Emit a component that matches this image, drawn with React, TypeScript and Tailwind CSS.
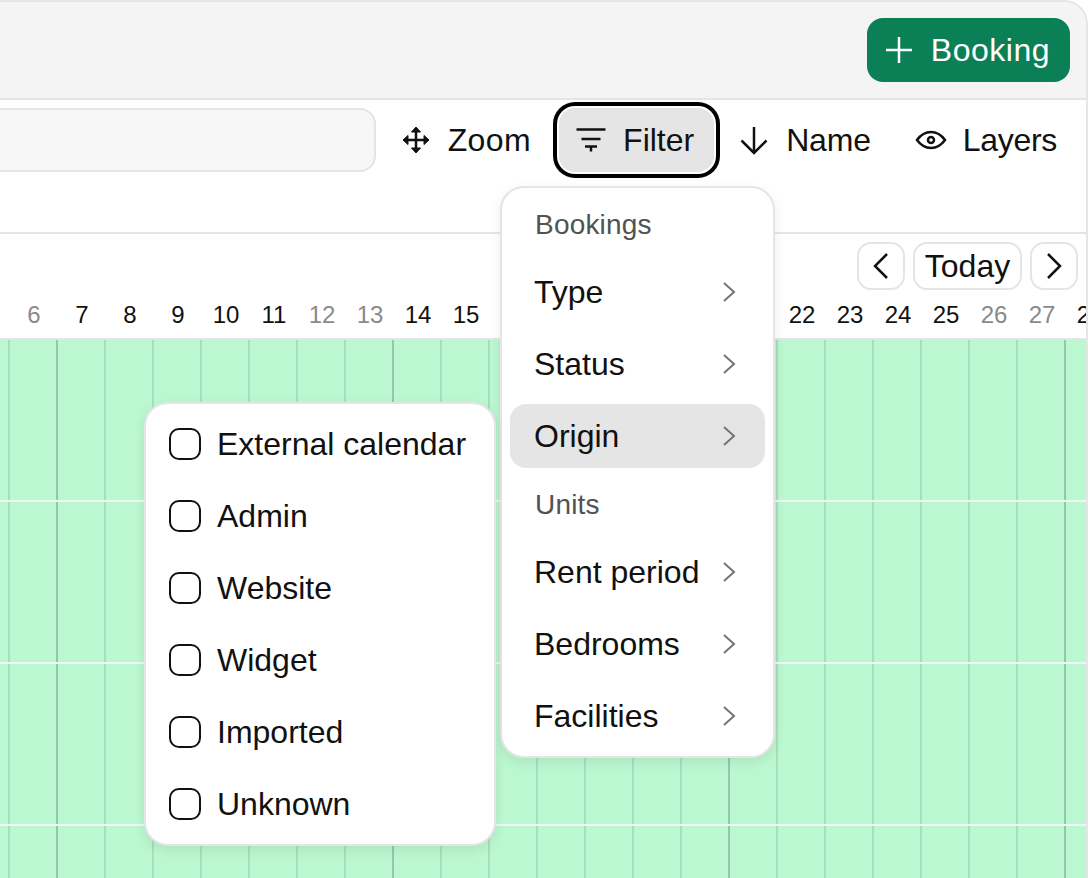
function PlusIcon() {
  return (
    <svg viewBox="0 0 32 32" className="w-8 h-8 shrink-0" fill="none" stroke="currentColor" strokeWidth="2.5">
      <path d="M16 3V29M3 16H29" />
    </svg>
  );
}

function MoveIcon() {
  return (
    <svg viewBox="0 0 32 32" className="w-8 h-8 shrink-0" fill="currentColor" stroke="currentColor" strokeWidth="1" strokeLinejoin="round">
      <path d="M16 5V27M5 16H27" fill="none" strokeWidth="2.5" />
      <path d="M16 3L20.5 8H11.5Z" />
      <path d="M16 29L20.5 24H11.5Z" />
      <path d="M3 16L8 11.5V20.5Z" />
      <path d="M29 16L24 11.5V20.5Z" />
    </svg>
  );
}

function FilterIcon() {
  return (
    <svg viewBox="0 0 32 32" className="w-8 h-8 shrink-0" fill="none" stroke="currentColor" strokeWidth="2.5">
      <path d="M1.5 5.5H30.5M6.5 15H25.5M10 22.5H22M16 22.5V27.5" />
    </svg>
  );
}

function ArrowDownIcon() {
  return (
    <svg viewBox="0 0 32 32" className="w-8 h-8 shrink-0" fill="none" stroke="currentColor" strokeWidth="2.5">
      <path d="M16 3V29M3.5 16.5L16 29L28.5 16.5" />
    </svg>
  );
}

function EyeIcon() {
  return (
    <svg viewBox="0 0 32 32" className="w-8 h-8 shrink-0" fill="none" stroke="currentColor" strokeWidth="2.5">
      <path d="M2 16C6 10.5 10.5 8 16 8S26 10.5 30 16C26 21.5 21.5 24 16 24S6 21.5 2 16Z" />
      <circle cx="16" cy="16" r="3" />
    </svg>
  );
}

function NavChevron({ dir }: { dir: "left" | "right" }) {
  return (
    <svg viewBox="0 0 32 32" className="w-8 h-8" fill="none" stroke="currentColor" strokeWidth="2.5">
      <path d={dir === "left" ? "M22 4L10 16L22 28" : "M10 4L22 16L10 28"} />
    </svg>
  );
}

function MenuChevron() {
  return (
    <svg viewBox="0 0 32 32" className="w-8 h-8 shrink-0 text-[#737373]" fill="none" stroke="currentColor" strokeWidth="2">
      <path d="M11 7L21 16L11 25" />
    </svg>
  );
}

function ToolButton({ icon, label, active, textClass }: { icon: React.ReactNode; label: string; active?: boolean; textClass?: string }) {
  return (
    <div
      className={
        active
          ? "flex items-center gap-4 h-16 pl-4 pr-5 rounded-2xl bg-[#e5e5e5] shadow-[0_0_0_2px_#ffffff,0_0_0_6px_#000000]"
          : "flex items-center gap-4 h-16 pl-4 pr-5 rounded-2xl"
      }
    >
      {icon}
      <span className={textClass}>{label}</span>
    </div>
  );
}

function MenuLabel({ label }: { label: string }) {
  return <div className="flex items-center h-14 pt-[2px] pl-[25px] text-[28px] tracking-[0.2px] text-[#525252]">{label}</div>;
}

function MenuRow({ label, active }: { label: string; active?: boolean }) {
  return (
    <div
      className={
        active
          ? "flex items-center justify-between h-16 pl-6 pr-5 rounded-2xl bg-[#e5e5e5]"
          : "flex items-center justify-between h-16 pl-6 pr-5 rounded-2xl"
      }
    >
      <span>{label}</span>
      <MenuChevron />
    </div>
  );
}

const dates = [6, 7, 8, 9, 10, 11, 12, 13, 14, 15, 16, 17, 18, 19, 20, 21, 22, 23, 24, 25, 26, 27, 28];
const weekend = [6, 12, 13, 19, 20, 26, 27];

function GridRow({ last }: { last?: boolean }) {
  return (
    <div className={last ? "flex flex-1" : "flex h-[162px] border-b-2 border-[#f0f7f2]"}>
      <div className="w-[10px] shrink-0 border-r-2 border-[#a6dfbb]" />
      {dates.map((d) => (
        <div
          key={d}
          className={
            (d - 6) % 7 === 0
              ? "w-12 shrink-0 border-r-2 border-[#93c9a9]"
              : "w-12 shrink-0 border-r-2 border-[#a6dfbb]"
          }
        />
      ))}
    </div>
  );
}

export default function App() {
  return (
    <div className="relative w-[1088px] h-[878px] overflow-hidden bg-white text-[32px] leading-none text-[#111111] font-['Liberation_Sans',Arial,sans-serif]">
      <div className="flex flex-col h-full overflow-hidden border-t-2 border-r-2 border-[#e5e5e5] rounded-tr-3xl">
        <div className="flex justify-end items-start h-[98px] pt-4 pr-4 bg-[#f4f4f4] border-b-2 border-[#e5e5e5] shrink-0">
          <div className="flex items-center gap-4 h-16 pl-4 pr-5 rounded-2xl tracking-[0.5px] bg-[#0b7f56] text-white">
            <PlusIcon />
            <span>Booking</span>
          </div>
        </div>

        <div className="flex items-start gap-2 h-[134px] pt-2 pr-[9px] border-b-2 border-[#e5e5e5] shrink-0">
          <div className="flex-1 h-16 -ml-6 rounded-2xl bg-[#f7f7f7] border-2 border-[#e5e5e5]" />
          <ToolButton icon={<MoveIcon />} label="Zoom" textClass="tracking-[0.4px]" />
          <ToolButton icon={<FilterIcon />} label="Filter" active />
          <ToolButton icon={<ArrowDownIcon />} label="Name" textClass="tracking-[-0.2px]" />
          <ToolButton icon={<EyeIcon />} label="Layers" textClass="tracking-[-0.3px]" />
        </div>

        <div className="h-[106px] border-b-2 border-[#e5e5e5] shrink-0">
          <div className="flex justify-end gap-2 pt-2 pr-2">
            <div className="flex items-center justify-center w-12 h-12 rounded-[14px] border-2 border-[#e5e5e5]">
              <NavChevron dir="left" />
            </div>
            <div className="flex items-center justify-center w-[109px] h-12 rounded-[14px] border-2 border-[#e5e5e5]">
              Today
            </div>
            <div className="flex items-center justify-center w-12 h-12 rounded-[14px] border-2 border-[#e5e5e5]">
              <NavChevron dir="right" />
            </div>
          </div>
          <div className="flex h-12 pt-[2px] pl-[10px] items-center text-2xl">
            {dates.map((d) => (
              <div
                key={d}
                className={weekend.includes(d) ? "w-12 shrink-0 text-center text-[#8a8a8a]" : "w-12 shrink-0 text-center"}
              >
                {d}
              </div>
            ))}
          </div>
        </div>

        <div className="flex flex-col flex-1 bg-[#bbf7d0]">
          <GridRow />
          <GridRow />
          <GridRow />
          <GridRow last />
        </div>
      </div>

      <div className="absolute left-[500px] top-[186px] w-[275px] flex flex-col gap-2 p-2 bg-white border-2 border-[#e5e5e5] rounded-3xl shadow-[0_4px_12px_rgba(0,0,0,0.08)]">
        <MenuLabel label="Bookings" />
        <MenuRow label="Type" />
        <MenuRow label="Status" />
        <MenuRow label="Origin" active />
        <MenuLabel label="Units" />
        <MenuRow label="Rent period" />
        <MenuRow label="Bedrooms" />
        <MenuRow label="Facilities" />
      </div>

      <div className="absolute left-[144px] top-[402px] w-[352px] flex flex-col gap-2 p-2 bg-white border-2 border-[#e5e5e5] rounded-3xl shadow-[0_4px_12px_rgba(0,0,0,0.08)]">
        {["External calendar", "Admin", "Website", "Widget", "Imported", "Unknown"].map((o) => (
          <div key={o} className="flex items-center gap-4 h-16 pl-[15px] pr-4 rounded-2xl">
            <div className="w-8 h-8 shrink-0 rounded-[10px] border-2 border-[#111111]" />
            <span>{o}</span>
          </div>
        ))}
      </div>
    </div>
  );
}
